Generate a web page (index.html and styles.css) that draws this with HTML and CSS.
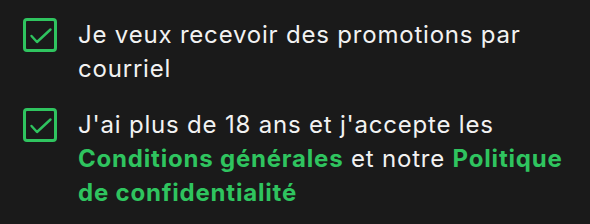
FILE: index.html
```html
<!DOCTYPE html>
<html lang="fr">
<head>
    <meta charset="UTF-8">
    <meta name="viewport" content="width=device-width, initial-scale=1.0">
    <title>Consentements</title>
    <link rel="stylesheet" href="styles.css">
</head>
<body>

    <form class="consent-list">
        <!-- Promotions -->
        <label class="consent-item">
            <span class="check-box">
                <svg viewBox="0 0 28 28" width="28" height="28"><path d="M5.5 15l5.5 6L24.5 8.5" fill="none" stroke="#2fc45f" stroke-width="2.4" stroke-linecap="round" stroke-linejoin="round"/></svg>
            </span>
            <span class="consent-text">Je veux recevoir des promotions par courriel</span>
        </label>

        <!-- Age + conditions -->
        <label class="consent-item">
            <span class="check-box">
                <svg viewBox="0 0 28 28" width="28" height="28"><path d="M5.5 15l5.5 6L24.5 8.5" fill="none" stroke="#2fc45f" stroke-width="2.4" stroke-linecap="round" stroke-linejoin="round"/></svg>
            </span>
            <span class="consent-text">J'ai plus de 18 ans et j'accepte les <a href="#" class="green-link">Conditions générales</a> et notre <a href="#" class="green-link">Politique de confidentialité</a></span>
        </label>
    </form>

</body>
</html>
```

FILE: styles.css
```css
body {
    margin: 0;
    padding: 18px 12px 0 23px;
    background: #1a1a1a;
    font-family: Inter, "Open Sans", sans-serif;
    color: #f2f2f2;
}
.consent-list {
    display: flex;
    flex-direction: column;
    gap: 22px;
}
.consent-item {
    display: flex;
    align-items: flex-start;
    gap: 21px;
}
.check-box {
    flex: none;
    width: 34px;
    height: 34px;
    box-sizing: border-box;
    border: 3px solid #2fc45f;
    border-radius: 4px;
    display: flex;
    align-items: center;
    justify-content: center;
}
.consent-text {
    font-size: 24px;
    line-height: 34px;
    letter-spacing: 0.8px;
}
.green-link {
    color: #2fc45f;
    font-weight: 700;
    text-decoration: none;
}
```
